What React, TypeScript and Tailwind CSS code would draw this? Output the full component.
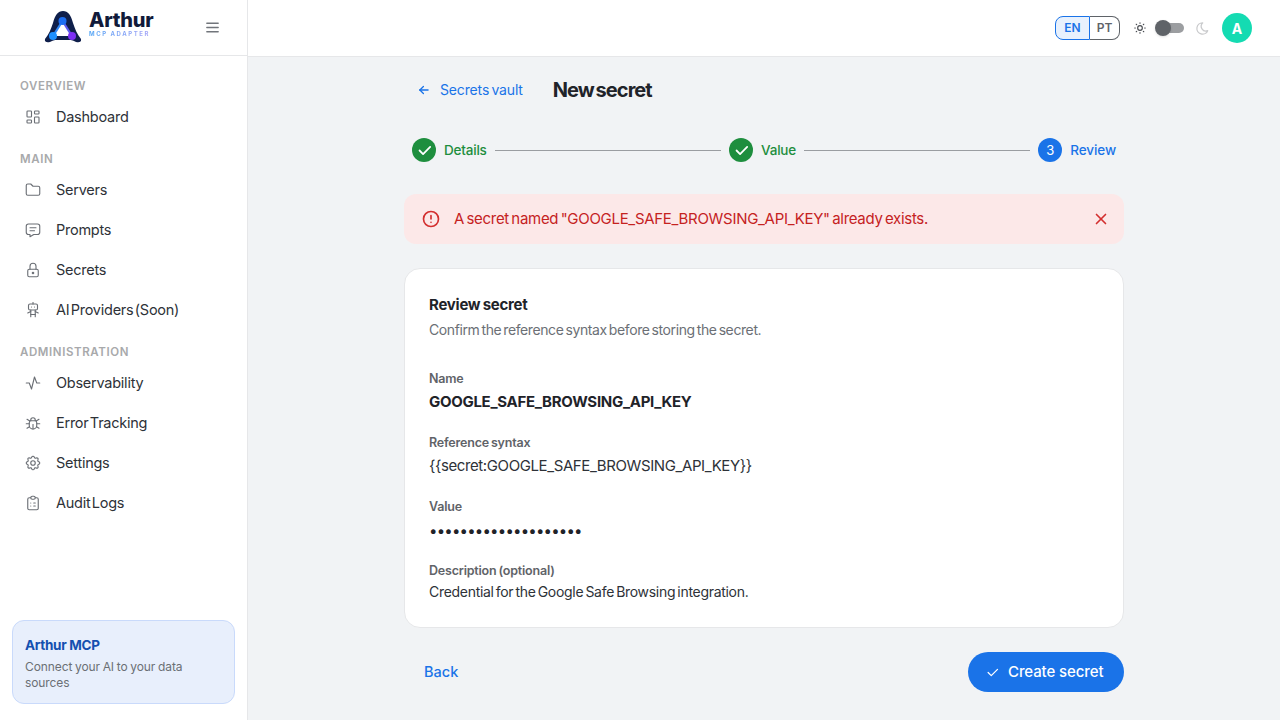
import { ReactNode } from "react";
import {
  TbActivity,
  TbAlertCircle,
  TbArrowLeft,
  TbBug,
  TbCheck,
  TbClipboardList,
  TbFolder,
  TbLayoutDashboard,
  TbLock,
  TbMenu2,
  TbMessage,
  TbMoon,
  TbRobot,
  TbSettings,
  TbSun,
  TbX,
} from "react-icons/tb";
import { IconType } from "react-icons";

const sections: { title: string; items: { label: string; icon: IconType }[] }[] = [
  { title: "OVERVIEW", items: [{ label: "Dashboard", icon: TbLayoutDashboard }] },
  {
    title: "MAIN",
    items: [
      { label: "Servers", icon: TbFolder },
      { label: "Prompts", icon: TbMessage },
      { label: "Secrets", icon: TbLock },
      { label: "AI Providers (Soon)", icon: TbRobot },
    ],
  },
  {
    title: "ADMINISTRATION",
    items: [
      { label: "Observability", icon: TbActivity },
      { label: "Error Tracking", icon: TbBug },
      { label: "Settings", icon: TbSettings },
      { label: "Audit Logs", icon: TbClipboardList },
    ],
  },
];

function Logo() {
  return (
    <div className="flex items-center gap-[7px]">
      <svg width="38" height="34" viewBox="0 0 38 34" fill="none" className="-mt-[2px]">
        <defs>
          <linearGradient id="bar" x1="0" x2="1" y1="0" y2="0">
            <stop offset="0" stopColor="#1e90ff" />
            <stop offset="1" stopColor="#7c2ff5" />
          </linearGradient>
        </defs>
        <path
          d="M1 29 C5 24 7 19 9 13 C11 5 14 1 19 1 C24 1 27 5 29 13 C31 19 33 24 37 29 C38 33 33 33 30 31 C28 30 27 30 26 30 L12 30 C11 30 10 30 8 31 C5 33 0 33 1 29Z"
          fill="#0f1f4b"
        />
        <path d="M18.5 11 L9 26 L28 26 Z" fill="#ffffff" />
        <path d="M18.5 11 L9 26" stroke="#2f86f6" strokeWidth="2.2" />
        <path d="M18.5 11 L28 26" stroke="#5b5bf0" strokeWidth="2.2" />
        <path d="M9 26 L28 26" stroke="url(#bar)" strokeWidth="2.2" />
        <circle cx="18.5" cy="11" r="4" fill="#1d6ff2" />
        <circle cx="9" cy="26" r="4" fill="#1e90ff" />
        <circle cx="28" cy="26" r="4" fill="#7c2ff5" />
      </svg>
      <div className="flex flex-col mb-[9px]">
        <span className="text-[20px] leading-[20px] font-extrabold tracking-[-0.2px] text-[#111a3a]">Arthur</span>
        <span className="text-[6px] leading-[7px] font-bold tracking-[1.55px] whitespace-nowrap bg-gradient-to-r from-[#4da3f5] to-[#a9a4f7] bg-clip-text text-transparent">
          MCP ADAPTER
        </span>
      </div>
    </div>
  );
}

function Sidebar() {
  return (
    <aside className="w-[248px] h-full shrink-0 flex flex-col bg-white border-r border-[#e6e7e9]">
      <div className="h-[56px] shrink-0 border-b border-[#e6e7e9] flex items-center pl-[44px] pr-[26px] justify-between">
        <Logo />
        <TbMenu2 className="text-[#71757b]" size={17} />
      </div>
      <nav className="flex-1 pt-[21px]">
        {sections.map((s) => (
          <div key={s.title} className="mb-[13px]">
            <div className="h-[18px] leading-[18px] pl-5 mb-[2px] text-[11.5px] font-semibold tracking-[0.6px] text-[#a8a9ab]">
              {s.title}
            </div>
            {s.items.map((it) => (
              <div key={it.label} className="h-10 flex items-center pl-[24px] text-[#2e3238]">
                <it.icon size={18} strokeWidth={1.5} className="text-[#6b6f75] shrink-0" />
                <span className="ml-[14px] text-[14.5px] tracking-[-0.25px] [word-spacing:-2.5px]">{it.label}</span>
              </div>
            ))}
          </div>
        ))}
      </nav>
      <div className="mx-3 mb-4 h-[84px] rounded-xl border border-[#c9dafb] bg-[#e8effc] px-3 pt-[14px]">
        <div className="text-[13.5px] leading-[20px] font-bold tracking-[-0.3px] text-[#1450b0]">Arthur MCP</div>
        <div className="mt-[4px] text-[12px] leading-4 tracking-[-0.1px] [word-spacing:-0.5px] text-[#6b6f75]">
          Connect your AI to your data sources
        </div>
      </div>
    </aside>
  );
}

function TopBar() {
  return (
    <header className="h-[57px] shrink-0 bg-white border-b border-[#e6e7e9] flex items-center justify-end pr-[28px]">
      <div className="flex h-6 text-[12px] font-semibold">
        <div className="w-[35px] flex items-center justify-center rounded-l-lg border border-[#1a73e8] bg-[#e8f1fd] text-[#1a73e8]">EN</div>
        <div className="w-[30px] flex items-center justify-center rounded-r-lg border border-l-0 border-[#5f6368] text-[#5f6368]">PT</div>
      </div>
      <TbSun size={14} className="ml-[13px] text-[#4a4d52]" />
      <div className="ml-[9px] relative w-[28px] h-[10px] rounded-full bg-[#9c9ea1]">
        <div className="absolute -left-[1px] -top-[3px] w-4 h-4 rounded-full bg-[#5f6368] shadow-sm" />
      </div>
      <TbMoon size={15} className="ml-[11px] text-[#c9cacc]" />
      <div className="ml-[12px] w-[30px] h-[30px] rounded-full bg-[#14dbb2] text-white text-[14px] font-bold flex items-center justify-center">
        A
      </div>
    </header>
  );
}

function StepDone({ label }: { label: string }) {
  return (
    <div className="flex items-center gap-2 shrink-0">
      <div className="w-6 h-6 rounded-full bg-[#1e8e3e] flex items-center justify-center">
        <TbCheck size={17} strokeWidth={2.5} className="text-white" />
      </div>
      <span className="text-[13.5px] font-medium tracking-[-0.2px] text-[#1e8e3e]">{label}</span>
    </div>
  );
}

function Field({ label, children, gap = "mt-[3px]" }: { label: string; children: ReactNode; gap?: string }) {
  return (
    <div>
      <div className="h-[18px] leading-[18px] text-[12.5px] font-semibold tracking-[-0.2px] [word-spacing:-1px] text-[#5f6368]">{label}</div>
      <div className={gap}>{children}</div>
    </div>
  );
}

export default function App() {
  return (
    <div className="h-screen w-full flex overflow-hidden bg-[#f1f3f5] font-['Inter',sans-serif]">
      <Sidebar />
      <main className="flex-1 min-w-0 flex flex-col">
        <TopBar />
        <div className="w-[720px] mx-auto">
          <div className="h-[66px] flex items-center pl-[13px]">
            <TbArrowLeft size={14} strokeWidth={2.2} className="text-[#1a73e8]" />
            <span className="ml-[9px] -mt-[2px] text-[14px] tracking-[-0.15px] [word-spacing:-1.5px] text-[#1a73e8]">Secrets vault</span>
            <h1 className="ml-[30px] text-[20px] font-bold tracking-[-0.95px] [word-spacing:-2px] text-[#1f2329]">New secret</h1>
          </div>
          <div className="h-[24px] mt-[15px] px-2 flex items-center">
            <StepDone label="Details" />
            <div className="flex-1 h-px mx-2 bg-[#9a9da1]" />
            <StepDone label="Value" />
            <div className="flex-1 h-px mx-2 bg-[#9a9da1]" />
            <div className="flex items-center gap-2 shrink-0">
              <div className="w-6 h-6 pt-[1px] rounded-full bg-[#1a73e8] text-white text-[13px] flex items-center justify-center">3</div>
              <span className="text-[13.5px] font-medium tracking-[-0.1px] text-[#1a73e8]">Review</span>
            </div>
          </div>
          <div className="mt-[32px] h-[50px] rounded-xl bg-[#fce8e8] flex items-center pl-[17px] pr-[14px] text-[#c5221f]">
            <TbAlertCircle size={20} className="text-[#d32f2f] shrink-0" />
            <span className="ml-[13px] mt-[1px] flex-1 text-[15px] tracking-[-0.3px] [word-spacing:-1.5px]">
              A secret named "GOOGLE_SAFE_BROWSING_API_KEY" already exists.
            </span>
            <TbX size={18} strokeWidth={2.2} className="text-[#d32f2f]" />
          </div>
          <section className="mt-6 h-[360px] rounded-2xl bg-white border border-[#e6e7e9] px-6 pt-[26px]">
            <h2 className="h-[20px] leading-[20px] text-[15px] font-bold tracking-[-0.25px] [word-spacing:-1px] text-[#1f2329]">Review secret</h2>
            <p className="mt-[5px] h-5 leading-5 text-[14px] tracking-[-0.4px] [word-spacing:-1.5px] text-[#6b6f75]">
              Confirm the reference syntax before storing the secret.
            </p>
            <div className="mt-[30px] flex flex-col gap-5">
              <Field label="Name">
                <div className="h-[23px] leading-[21px] text-[15px] font-bold tracking-[-0.3px] text-[#1f2329]">
                  GOOGLE_SAFE_BROWSING_API_KEY
                </div>
              </Field>
              <Field label="Reference syntax">
                <div className="h-[23px] leading-[21px] text-[15px] tracking-[-0.4px] text-[#2e3238]">
                  {"{{secret:GOOGLE_SAFE_BROWSING_API_KEY}}"}
                </div>
              </Field>
              <Field label="Value">
                <div className="h-[23px] leading-[23px] text-[15px] tracking-[-0.8px] text-[#1f2329]">
                  ••••••••••••••••••••
                </div>
              </Field>
              <Field label="Description (optional)" gap="mt-[2px]">
                <div className="h-[21px] leading-[19px] text-[14px] tracking-[-0.3px] [word-spacing:-1.5px] text-[#2e3238]">
                  Credential for the Google Safe Browsing integration.
                </div>
              </Field>
            </div>
          </section>
          <div className="mt-6 flex items-center justify-between">
            <span className="ml-5 text-[14.5px] font-medium text-[#1a73e8]">Back</span>
            <div className="h-10 w-[156px] rounded-full bg-[#1a73e8] text-white flex items-center pl-[17px] gap-2">
              <TbCheck size={15} />
              <span className="text-[15px] font-medium tracking-[-0.1px]">Create secret</span>
            </div>
          </div>
        </div>
      </main>
    </div>
  );
}
